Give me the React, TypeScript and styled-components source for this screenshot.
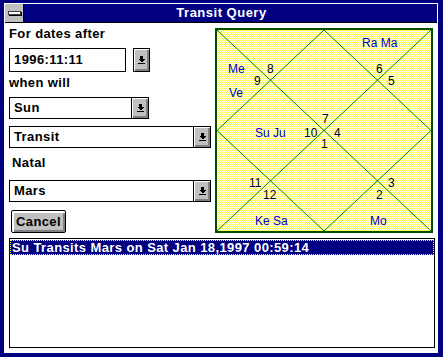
import styled, { createGlobalStyle } from 'styled-components';

const GlobalStyle = createGlobalStyle`
  html, body {
    margin: 0;
    padding: 0;
    background: #000080;
    overflow: hidden;
  }
`;

const FONT = `"Liberation Sans", Arial, sans-serif`;

interface Mark {
  text: string;
  x: number;
  y: number;
  planet?: boolean;
}

const marks: Mark[] = [
  { text: 'Ra Ma', x: 145, y: 17, planet: true },
  { text: 'Me', x: 11, y: 43, planet: true },
  { text: '8', x: 50, y: 43 },
  { text: '9', x: 37, y: 55 },
  { text: 'Ve', x: 12, y: 67, planet: true },
  { text: '6', x: 159, y: 43 },
  { text: '5', x: 171, y: 55 },
  { text: '7', x: 105, y: 93 },
  { text: 'Su Ju', x: 38, y: 107, planet: true },
  { text: '10', x: 87, y: 107 },
  { text: '4', x: 117, y: 107 },
  { text: '1', x: 104, y: 118 },
  { text: '11', x: 32, y: 157 },
  { text: '12', x: 46, y: 169 },
  { text: '3', x: 171, y: 157 },
  { text: '2', x: 159, y: 169 },
  { text: 'Ke Sa', x: 38, y: 195, planet: true },
  { text: 'Mo', x: 153, y: 195, planet: true },
];

function ArrowGlyph() {
  return (
    <svg width="7" height="8" viewBox="0 0 7 8" shapeRendering="crispEdges">
      <rect x="2" y="0" width="3" height="3" fill="#000" />
      <polygon points="0,3 7,3 3.5,6.5" fill="#000" />
      <rect x="0" y="7" width="7" height="1" fill="#000" />
    </svg>
  );
}

function Chart() {
  const w = 214;
  const h = 201;
  return (
    <ChartBox>
      <svg width={w} height={h} viewBox={`0 0 ${w} ${h}`}>
        <defs>
          <pattern id="dots" width="2" height="2" patternUnits="userSpaceOnUse">
            <rect width="2" height="2" fill="#ffff50" />
            <rect x="0" y="0" width="1" height="1" fill="#ffffff" />
            <rect x="1" y="1" width="1" height="1" fill="#ffffff" />
          </pattern>
        </defs>
        <rect width={w} height={h} fill="url(#dots)" />
        <g stroke="#008000" strokeWidth="1" fill="none">
          <line x1="0" y1="0" x2={w} y2={h} />
          <line x1={w} y1="0" x2="0" y2={h} />
          <polygon points={`${w / 2},0 ${w},${h / 2} ${w / 2},${h} 0,${h / 2}`} />
        </g>
        {marks.map((m, i) => (
          <text
            key={i}
            x={m.x}
            y={m.y}
            fill={m.planet ? '#0000c0' : '#000'}
            fontFamily={FONT}
            fontWeight="normal"
            fontSize="12"
          >
            {m.text}
          </text>
        ))}
      </svg>
    </ChartBox>
  );
}

function Combo({ value, width }: { value: string; width: number }) {
  return (
    <ComboBox $width={width}>
      <ComboField>{value}</ComboField>
      <ComboButton>
        <ArrowGlyph />
      </ComboButton>
    </ComboBox>
  );
}

export default function App() {
  return (
    <>
      <GlobalStyle />
      <Window>
        <Frame>
          <TitleBar>
            <ControlBox>
              <ControlBar />
            </ControlBox>
            <Title>Transit Query</Title>
          </TitleBar>
          <Client>
            <TopRow>
              <LeftColumn>
                <Label $top={-2}>For dates after</Label>
                <DateRow>
                  <DateField>1996:11:11</DateField>
                  <SpinButton>
                    <ArrowGlyph />
                  </SpinButton>
                </DateRow>
                <Label $top={3}>when will</Label>
                <Spaced $top={6}>
                  <Combo value="Sun" width={140} />
                </Spaced>
                <Spaced $top={7}>
                  <Combo value="Transit" width={202} />
                </Spaced>
                <Label $top={7} $indent={3}>
                  Natal
                </Label>
                <Spaced $top={9}>
                  <Combo value="Mars" width={202} />
                </Spaced>
                <CancelButton>Cancel</CancelButton>
              </LeftColumn>
              <Chart />
            </TopRow>
            <ResultList>
              <ResultRow $selected>Su Transits Mars on Sat Jan 18,1997 00:59:14</ResultRow>
            </ResultList>
          </Client>
        </Frame>
      </Window>
    </>
  );
}

const Window = styled.div`
  width: 443px;
  height: 357px;
  box-sizing: border-box;
  padding: 3px 5px 4px 4px;
  background: #000080;
  display: flex;
`;

const Frame = styled.div`
  flex: 1;
  display: flex;
  flex-direction: column;
  border: 1px solid #ffffff;
  background: #ffffff;
`;

const TitleBar = styled.div`
  height: 18px;
  display: flex;
  align-items: stretch;
  background: #000080;
  border-bottom: 1px solid #000;
`;

const ControlBox = styled.div`
  width: 18px;
  background: #c0c0c0;
  border-right: 1px solid #000;
  display: flex;
  align-items: center;
  justify-content: center;
`;

const ControlBar = styled.div`
  width: 11px;
  height: 2px;
  background: #ffffff;
  border: 1px solid #404040;
  box-shadow: 1px 1px 0 #000;
`;

const Title = styled.div`
  flex: 1;
  color: #ffffff;
  font-family: ${FONT};
  font-weight: bold;
  font-size: 13px;
  letter-spacing: 0.5px;
  line-height: 18px;
  text-align: center;
  padding-right: 18px;
`;

const Client = styled.div`
  flex: 1;
  display: flex;
  flex-direction: column;
  padding: 5px 2px 4px 4px;
  font-family: ${FONT};
  font-weight: bold;
  font-size: 13px;
  letter-spacing: 0.4px;
  color: #000;
`;

const TopRow = styled.div`
  display: flex;
  gap: 4px;
  align-items: flex-start;
`;

const LeftColumn = styled.div`
  width: 202px;
  display: flex;
  flex-direction: column;
  align-items: flex-start;
`;

const Label = styled.div<{ $top: number; $indent?: number }>`
  margin-top: ${(p) => p.$top}px;
  padding-left: ${(p) => p.$indent ?? 0}px;
  line-height: 16px;
  height: 16px;
`;

const Spaced = styled.div<{ $top: number }>`
  margin-top: ${(p) => p.$top}px;
`;

const DateRow = styled.div`
  margin-top: 6px;
  display: flex;
  gap: 7px;
`;

const DateField = styled.div`
  width: 117px;
  height: 24px;
  box-sizing: border-box;
  border: 1px solid #000;
  padding-left: 4px;
  line-height: 22px;
`;

const bevel = `
  background: #c0c0c0;
  box-shadow: inset 1px 1px 0 #ffffff, inset -1px -1px 0 #808080, inset -2px -2px 0 #808080;
`;

const SpinButton = styled.div`
  width: 17px;
  height: 24px;
  box-sizing: border-box;
  border: 1px solid #000;
  ${bevel}
  display: flex;
  align-items: center;
  justify-content: center;
`;

const ComboBox = styled.div<{ $width: number }>`
  width: ${(p) => p.$width}px;
  height: 22px;
  box-sizing: border-box;
  border: 1px solid #000;
  display: flex;
`;

const ComboField = styled.div`
  flex: 1;
  padding-left: 4px;
  line-height: 20px;
`;

const ComboButton = styled.div`
  width: 16px;
  border-left: 1px solid #000;
  ${bevel}
  display: flex;
  align-items: center;
  justify-content: center;
`;

const CancelButton = styled.button`
  margin-top: 8px;
  margin-left: 2px;
  width: 55px;
  height: 23px;
  border: 1px solid #000;
  border-radius: 2px;
  ${bevel}
  box-shadow: inset 1px 1px 0 #ffffff, inset 2px 2px 0 #ffffff, inset -1px -1px 0 #808080,
    inset -2px -2px 0 #808080;
  font-family: ${FONT};
  font-weight: bold;
  font-size: 13px;
  letter-spacing: 0.4px;
  color: #000;
  padding: 0;
`;

const ChartBox = styled.div`
  width: 218px;
  height: 205px;
  box-sizing: border-box;
  border: 2px solid #005000;
  letter-spacing: 0;
  svg {
    display: block;
  }
`;

const ResultList = styled.div`
  margin-top: 5px;
  height: 110px;
  box-sizing: border-box;
  border: 1px solid #000;
  padding: 1px 0 0 0;
`;

const ResultRow = styled.div<{ $selected?: boolean }>`
  height: 15px;
  line-height: 15px;
  padding-left: 2px;
  background: ${(p) => (p.$selected ? '#000080' : 'transparent')};
  color: ${(p) => (p.$selected ? '#ffffff' : '#000')};
  outline: ${(p) => (p.$selected ? '1px dotted #ffff00' : 'none')};
  outline-offset: -1px;
  white-space: nowrap;
`;
